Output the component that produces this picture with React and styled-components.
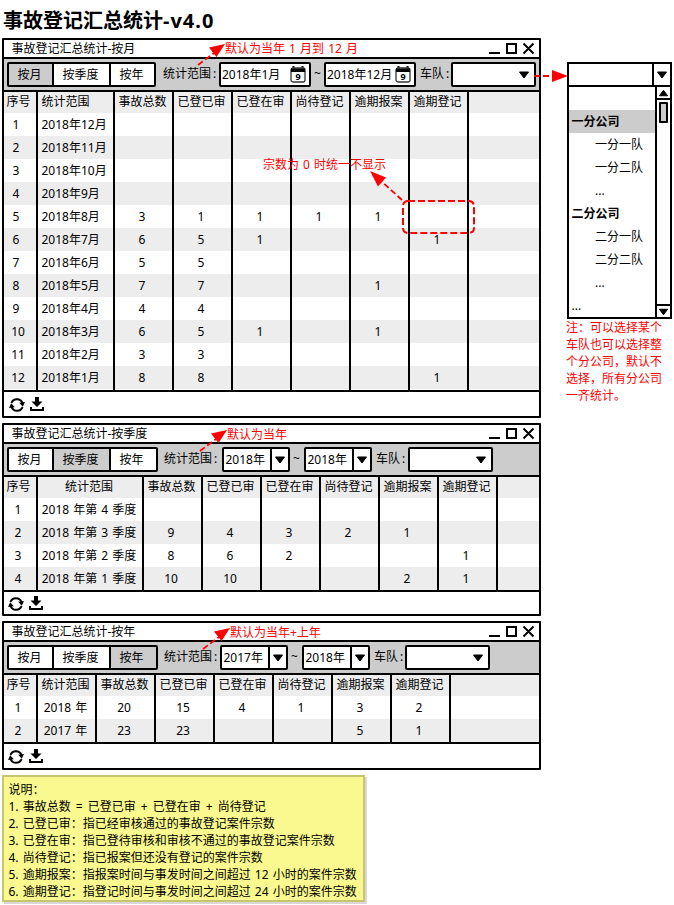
import React from "react";
import styled, { createGlobalStyle, css } from "styled-components";

const Global = createGlobalStyle`
  body { margin: 0; background: #fff; }
  *, *::before, *::after { box-sizing: border-box; }
`;

const Page = styled.main`
  position: relative;
  width: 674px;
  height: 905px;
  overflow: hidden;
  padding-left: 2px;
  background: #fff;
  color: #000;
  font: 12px/17px "Noto Sans", "Noto Sans CJK SC", sans-serif;
  word-spacing: 1px;
`;

const Heading = styled.h1`
  margin: 0;
  height: 38px;
  padding: 5px 0 0 1px;
  font-size: 20px;
  line-height: 32px;
  font-weight: 700;
  white-space: nowrap;
`;

const Version = styled.span`
  letter-spacing: 1px;
`;

const Body = styled.div`
  display: flex;
  align-items: flex-start;
  gap: 25px;
`;

const Main = styled.div`
  display: flex;
  flex-direction: column;
  width: 540px;
  flex: none;
`;

const Panel = styled.section`
  width: 539px;
  border: 2px solid #000;
  border-radius: 1px;
  margin-bottom: 5px;
  background: #fff;
`;

const TitleBar = styled.header`
  display: flex;
  justify-content: space-between;
  height: 19px;
  padding: 0 4px 0 7.5px;
  border-bottom: 2px solid #000;
`;

const PanelTitle = styled.span`
  line-height: 18px;
  white-space: nowrap;
`;

const Toolbar = styled.div`
  display: flex;
  height: 33px;
  padding: 3px 0 0 3px;
  background: #ccc;
  border-bottom: 2px solid #000;
`;

const Segments = styled.div`
  display: flex;
  width: ${(p) => p.$width}px;
  height: 25px;
  border: 2px solid #000;
  border-radius: 2px;
  background: #000;
  gap: 2px;
`;

const Segment = styled.button`
  flex: ${(p) => (p.$width ? `0 0 ${p.$width}px` : "0 0 43px")};
  padding: 0 2px 0 0;
  border: 0;
  font: inherit;
  line-height: 20px;
  color: #000;
  background: ${(p) => (p.$active ? "#ccc" : "#fff")};

  &:last-child {
    flex: 1;
    padding-right: ${(p) => p.$endPad}px;
  }
`;

const Label = styled.span`
  width: ${(p) => p.$width}px;
  padding-left: ${(p) => p.$indent}px;
  line-height: 24px;
  white-space: nowrap;
`;

const Colon = styled.span`
  margin-left: 2px;
`;

const field = css`
  display: flex;
  height: 25px;
  border: 2px solid #000;
  border-radius: 2px;
  background: #fff;
`;

const DateField = styled.div`
  ${field}
  width: 92px;
  justify-content: space-between;
  padding: 0 3px 0 1px;
  line-height: 21px;
  white-space: nowrap;

  svg { margin: 2px 0 0 -2px; flex: none; }
`;

const YearField = styled.div`
  ${field}
  width: 68px;
  line-height: 21px;
`;

const YearText = styled.span`
  width: 46px;
  padding-left: 1.5px;
`;

const CaretBox = styled.span`
  display: flex;
  flex: 1;
  align-items: center;
  justify-content: center;
  border-left: 2px solid #000;
`;

const TeamField = styled.div`
  ${field}
  width: 85px;
  align-items: center;
  justify-content: flex-end;
  padding-right: 4px;
`;

const Grid = styled.div`
  display: grid;
  grid-template-columns: ${(p) => p.$cols};
  grid-template-rows: 21px;
  grid-auto-rows: 23px;
`;

const Cell = styled.div`
  border-right: ${(p) => (p.$last ? "0" : "2px solid #000")};
  background: ${(p) => (p.$shade ? "#ededed" : "#fff")};
  text-align: ${(p) => (p.$left ? "left" : "center")};
  padding-left: ${(p) => (p.$left ? 3.5 : 0)}px;
  padding-right: ${(p) => (p.$number ? 3 : p.$left ? 0 : 2)}px;
  line-height: ${(p) => (p.$head ? 19 : 23)}px;
  white-space: nowrap;
`;

const IndexCell = styled(Cell)`
  padding: 0 ${(p) => (p.$head ? 3 : p.$shift ? 8 : 4)}px 0 0;
`;

const Tail = styled.div`
  display: grid;
  grid-template-columns: ${(p) => p.$cols};
  height: 1px;
`;

const Footer = styled.footer`
  display: flex;
  align-items: flex-start;
  gap: 5px;
  height: ${(p) => p.$height + 2}px;
  padding: ${(p) => (p.$height < 24 ? 4 : 5)}px 0 0 ${(p) => p.$indent}px;
  border-top: 2px solid #000;
`;

const Aside = styled.aside`
  width: 107px;
  padding-top: 24px;
`;

const ComboHead = styled.div`
  display: flex;
  width: 105px;
  height: 25px;
  border: 2px solid #000;
`;

const ComboInput = styled.span`
  width: 83px;
`;

const Menu = styled.div`
  display: flex;
  width: 105px;
  height: 232px;
  border: 2px solid #000;
  border-top: 0;
`;

const Options = styled.div`
  flex: 0 0 86px;
`;

const Option = styled.div`
  height: 23px;
  padding-left: ${(p) => (p.$child ? 26 : 2.5)}px;
  line-height: 23px;
  font-weight: ${(p) => (p.$group ? 700 : 400)};
  background: ${(p) => (p.$selected ? "#ccc" : "#fff")};
`;

const ScrollBar = styled.div`
  display: flex;
  flex-direction: column;
  align-items: center;
  width: 15px;
  border-left: 2px solid #000;
`;

const ScrollButton = styled.div`
  display: flex;
  flex: none;
  align-items: center;
  justify-content: center;
  width: 13px;
  height: 13px;
  border: 0 solid #000;
  border-bottom-width: ${(p) => (p.$down ? 0 : 2)}px;
  border-top-width: ${(p) => (p.$down ? 2 : 0)}px;
`;

const Thumb = styled.div`
  width: 9px;
  height: 21px;
  margin: 2px 0 auto;
  border: 2px solid #000;
  border-radius: 1px;
  background: #ccc;
`;

const SideNote = styled.p`
  width: 97px;
  margin: 0 0 0 -1px;
  color: #f00;
  line-height: 17px;
`;

const Sticky = styled.section`
  width: 363px;
  height: 127px;
  padding: 4px 0 0 4.5px;
  border: 2px solid #c6c670;
  background: #f9f98f;
  box-shadow: 2px 2px 0 #ddd6d6;
  white-space: nowrap;
`;

const Operator = styled.span`
  display: inline-block;
  width: 17px;
  text-align: center;
`;

const Callout = styled.span`
  position: absolute;
  left: ${(p) => p.$x}px;
  top: ${(p) => p.$y}px;
  color: #f00;
  white-space: nowrap;
`;

const Arrows = styled.svg`
  position: absolute;
  inset: 0;
  pointer-events: none;
`;

const CalendarDigit = styled.text`
  font: 700 9px "Noto Sans", sans-serif;
  text-anchor: middle;
`;

const Caret = ({ up, width = 12, height = 8 }) => (
  <svg width={width} height={height} viewBox="0 0 12 8">
    <path d={up ? "M1.500 7h9L6 1z" : "M1.500 1h9L6 7z"} stroke="#000" strokeLinejoin="round" />
  </svg>
);

const WindowControls = () => (
  <svg width="47" height="17" viewBox="0 0 47 17" fill="none" stroke="#000" strokeWidth="2">
    <path d="M1 13h11M19 4h9v9h-9zM35.5 3.5l10 10M45.5 3.5l-10 10" />
  </svg>
);

const CalendarIcon = () => (
  <svg width="16" height="17" viewBox="0 0 16 17">
    <path d="M3.500 0v3M12.500 0v3" stroke="#000" strokeWidth="2" />
    <rect x="1" y="2" width="14" height="14" rx="2" fill="#fff" stroke="#333" strokeWidth="1.300" />
    <path d="M1 2.500h14V6H1z" />
    <CalendarDigit x="8" y="14">9</CalendarDigit>
  </svg>
);

const RefreshIcon = () => (
  <svg width="16" height="16" viewBox="0 0 16 16">
    <path d="M2.400 5.800A6 6 0 0 1 13.500 6M13.600 10.200A6 6 0 0 1 2.500 10" fill="none" stroke="#000" strokeWidth="2" />
    <path d="M10.200 5.800L16 5l-2.200 4.700zM5.800 10.200L0 11l2.200-4.700z" />
  </svg>
);

const DownloadIcon = () => (
  <svg width="14" height="15" viewBox="0 0 14 15">
    <path d="M5 0h4v4.500h3.500L7 10 1.500 4.500H5z" />
    <path d="M0 10h2v2h10v-2h2v4H0z" />
  </svg>
);

const ARROWS = [
  { line: "M198 65L214 53", head: "M225 44L216.5 57L209 47.5z" },
  { line: "M200 451L216 439", head: "M227 430L218.5 443L211 433.5z" },
  { line: "M203 649L219 637", head: "M230 628L221.5 641L214 631.5z" },
  { line: "M534 76H553", head: "M568 76L552 82V70z" },
  { line: "M402 200L380 180", head: "M370 171L386 177.5L378 186.5z" },
];

const MODES = ["按月", "按季度", "按年"];
const METRICS = ["事故总数", "已登已审", "已登在审", "尚待登记", "逾期报案", "逾期登记"];

const monthRows = [
  ["2018年12月"],
  ["2018年11月"],
  ["2018年10月"],
  ["2018年9月"],
  ["2018年8月", 3, 1, 1, 1, 1],
  ["2018年7月", 6, 5, 1, "", "", 1],
  ["2018年6月", 5, 5],
  ["2018年5月", 7, 7, "", "", 1],
  ["2018年4月", 4, 4],
  ["2018年3月", 6, 5, 1, "", 1],
  ["2018年2月", 3, 3],
  ["2018年1月", 8, 8, "", "", "", 1],
];

const quarterRows = [
  ["2018 年第 4 季度"],
  ["2018 年第 3 季度", 9, 4, 3, 2, 1],
  ["2018 年第 2 季度", 8, 6, 2, "", "", 1],
  ["2018 年第 1 季度", 10, 10, "", "", 2, 1],
];

const yearRows = [
  ["2018 年", 20, 15, 4, 1, 3, 2],
  ["2017 年", 23, 23, "", "", 5, 1],
];

const options = [
  { text: "" },
  { text: "一分公司", group: true, selected: true },
  { text: "一分一队", child: true },
  { text: "一分二队", child: true },
  { text: "...", child: true },
  { text: "二分公司", group: true },
  { text: "二分一队", child: true },
  { text: "二分二队", child: true },
  { text: "...", child: true },
  { text: "..." },
];

function DataTable({ rows, rangeWidth, alignLeft }) {
  const cols = `34px ${rangeWidth}px repeat(6, 59px) 1fr`;
  const header = ["序号", "统计范围", ...METRICS, ""];
  return (
    <>
      <Grid $cols={cols}>
        {header.map((text, c) => {
          const Part = c === 0 ? IndexCell : Cell;
          return (
            <Part key={c} $head $shade $left={alignLeft && c === 1} $last={c === 8}>
              {text}
            </Part>
          );
        })}
        {rows.map((row, r) =>
          header.map((_, c) => {
            const Part = c === 0 ? IndexCell : Cell;
            return (
              <Part
                key={`${r}-${c}`}
                $shade={r % 2 === 1}
                $left={alignLeft && c === 1}
                $number={c > 1}
                $shift={alignLeft && r < 9}
                $last={c === 8}
              >
                {c === 0 ? r + 1 : row[c - 1]}
              </Part>
            );
          })
        )}
      </Grid>
      {alignLeft && (
        <Tail $cols={cols}>
          {header.map((_, c) => (
            <Cell key={c} $last={c === 8} />
          ))}
        </Tail>
      )}
    </>
  );
}

function ReportPanel({ title, mode, segWidth, labelWidth, labelIndent = 6, from, to, monthly, tilde, team, footer, iconIndent, table }) {
  const year = (text) => (
    <YearField>
      <YearText>{text}</YearText>
      <CaretBox><Caret /></CaretBox>
    </YearField>
  );
  const date = (text) => (
    <DateField>
      {text}
      <CalendarIcon />
    </DateField>
  );
  const picker = monthly ? date : year;
  return (
    <Panel>
      <TitleBar>
        <PanelTitle>{title}</PanelTitle>
        <WindowControls />
      </TitleBar>
      <Toolbar>
        <Segments $width={segWidth}>
          {MODES.map((m, i) => (
            <Segment key={m} $active={i === mode} $width={[43, 55, 0][i]} $endPad={segWidth - 147}>{m}</Segment>
          ))}
        </Segments>
        <Label $width={labelWidth} $indent={labelIndent}>统计范围<Colon>:</Colon></Label>
        {picker(from)}
        <Label $width={tilde} $indent={3}>~</Label>
        {picker(to)}
        <Label $width={team} $indent={4}>车队<Colon>:</Colon></Label>
        <TeamField><Caret /></TeamField>
      </Toolbar>
      <DataTable {...table} />
      <Footer $height={footer} $indent={iconIndent}>
        <RefreshIcon />
        <DownloadIcon />
      </Footer>
    </Panel>
  );
}

export default function App() {
  return (
    <Page>
      <Global />
      <Heading>事故登记汇总统计<Version>-v4.0</Version></Heading>
      <Body>
        <Main>
          <ReportPanel
            title="事故登记汇总统计-按月" mode={0} segWidth={149} labelWidth={63} labelIndent={7} monthly
            from="2018年1月" to="2018年12月" tilde={13} team={35} footer={24} iconIndent={5}
            table={{ rows: monthRows, rangeWidth: 77, alignLeft: true }}
          />
          <ReportPanel
            title="事故登记汇总统计-按季度" mode={1} segWidth={151} labelWidth={64}
            from="2018年" to="2018年" tilde={14} team={36} footer={22} iconIndent={4}
            table={{ rows: quarterRows, rangeWidth: 106 }}
          />
          <ReportPanel
            title="事故登记汇总统计-按年" mode={2} segWidth={151} labelWidth={62}
            from="2017年" to="2018年" tilde={14} team={35} footer={24} iconIndent={4}
            table={{ rows: yearRows, rangeWidth: 59 }}
          />
          <Sticky>
            <div>说明：</div>
            <div>
              1. 事故总数<Operator>=</Operator>已登已审<Operator>+</Operator>已登在审<Operator>+</Operator>尚待登记
            </div>
            <div>2. 已登已审：指已经审核通过的事故登记案件宗数</div>
            <div>3. 已登在审：指已登待审核和审核不通过的事故登记案件宗数</div>
            <div>4. 尚待登记：指已报案但还没有登记的案件宗数</div>
            <div>5. 逾期报案：指报案时间与事发时间之间超过 12 小时的案件宗数</div>
            <div>6. 逾期登记：指登记时间与事发时间之间超过 24 小时的案件宗数</div>
          </Sticky>
        </Main>
        <Aside>
          <ComboHead>
            <ComboInput />
            <CaretBox><Caret /></CaretBox>
          </ComboHead>
          <Menu>
            <Options>
              {options.map((o, i) => (
                <Option key={i} $child={o.child} $group={o.group} $selected={o.selected}>{o.text}</Option>
              ))}
            </Options>
            <ScrollBar>
              <ScrollButton><Caret up width={11} /></ScrollButton>
              <Thumb />
              <ScrollButton $down><Caret width={11} /></ScrollButton>
            </ScrollBar>
          </Menu>
          <SideNote>注：可以选择某个车队也可以选择整个分公司，默认不选择，所有分公司一齐统计。</SideNote>
        </Aside>
      </Body>
      <Callout $x={225} $y={40}>默认为当年 1 月到 12 月</Callout>
      <Callout $x={227} $y={426}>默认为当年</Callout>
      <Callout $x={230} $y={624}>默认为当年+上年</Callout>
      <Callout $x={263} $y={156}>宗数为 0 时统一不显示</Callout>
      <Arrows width="674" height="905" viewBox="0 0 674 905" fill="none">
        {ARROWS.map((a) => (
          <g key={a.head}>
            <path d={a.line} stroke="#f00" strokeWidth="1.8" strokeDasharray="6 3" />
            <path d={a.head} fill="#f00" />
          </g>
        ))}
        <rect x="403" y="201" width="71" height="32" rx="5" stroke="#f00" strokeWidth="2" strokeDasharray="7 3" />
      </Arrows>
    </Page>
  );
}
